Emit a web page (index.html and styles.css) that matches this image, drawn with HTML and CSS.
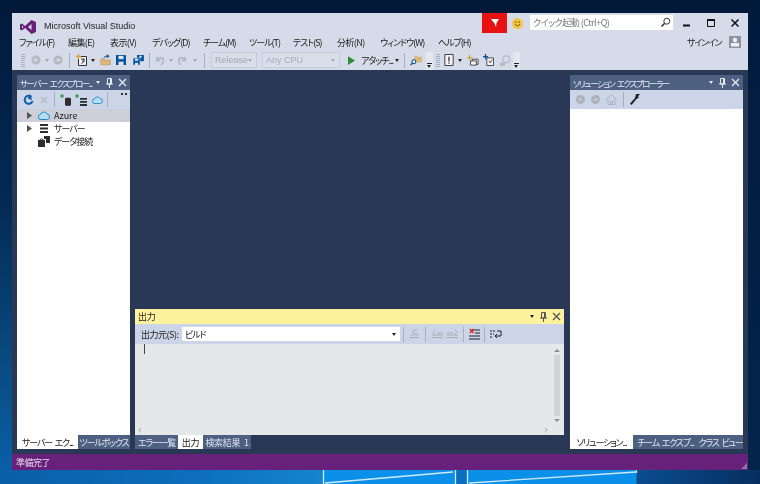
FILE: index.html
```html
<!DOCTYPE html>
<html lang="ja">
<head>
<meta charset="utf-8">
<title>Microsoft Visual Studio</title>
<link rel="stylesheet" href="styles.css">
</head>
<body>
<div class="desktop">
  <svg class="beams" width="760" height="14" viewBox="0 0 760 14"><path d="M455 0H467V14H455Z" fill="#0a6fc0"/><path d="M323.500 0V14M325 13L453 2M455.500 0V14M467.500 0V14M469 13L636 2" stroke="#cfe9fa" stroke-width="1.300" fill="none"/><path d="M636.500 0V3" stroke="#bfe3f8" stroke-width="1.300"/></svg>
  <div class="window">
    <header class="head">
      <div class="title-row">
        <svg class="vs-logo" width="16" height="14" viewBox="0 0 16 14"><path d="M11.500 0L16 2V12L11.500 14L5 8L2 10.500L0 9.500V4.500L2 3.500L5 6ZM11.500 4L8 7L11.500 10ZM2 5.500V8.500L3.600 7Z" fill="#68217a"/></svg>
        <span class="app-name">Microsoft Visual Studio</span>
        <div class="flag"><svg width="10" height="10" viewBox="0 0 10 10"><path d="M1 1H9L6.500 5L6 9L4.500 5.500Z" fill="#fff"/></svg></div>
        <svg class="smile" width="11" height="11" viewBox="0 0 11 11"><circle cx="5.500" cy="5.500" r="5.500" fill="#f3c545"/><circle cx="3.800" cy="4" r=".8" fill="#7a5a10"/><circle cx="7.200" cy="4" r=".8" fill="#7a5a10"/><path d="M3 6.500Q5.500 9 8 6.500" stroke="#7a5a10" fill="none"/></svg>
        <div class="quick"><span>クイック起動 (Ctrl+Q)</span>
          <svg width="11" height="11" viewBox="0 0 11 11"><circle cx="6.800" cy="4.200" r="3" stroke="#333" stroke-width="1" fill="none"/><path d="M4.500 6.500L1.500 9.500" stroke="#333" stroke-width="1.600"/></svg></div>
        <div class="win-btns">
          <svg width="10" height="10" viewBox="0 0 10 10"><path d="M1 7.500H8" stroke="#111" stroke-width="2"/></svg>
          <svg width="10" height="10" viewBox="0 0 10 10"><path d="M1.500 2.500H8.500V8.500H1.500Z" stroke="#111" fill="none"/><path d="M1 2H9" stroke="#111" stroke-width="2"/></svg>
          <svg width="10" height="10" viewBox="0 0 10 10"><path d="M1.500 1.500L8.500 8.500M8.500 1.500L1.500 8.500" stroke="#111" stroke-width="1.500"/></svg>
        </div>
      </div>
      <div class="menu-row">
        <nav class="menu">
          <span class="m1">ファイル(F)</span><span class="m2">編集(E)</span><span class="m3">表示(V)</span><span class="m4">デバッグ(D)</span><span class="m5">チーム(M)</span><span class="m6">ツール(T)</span><span class="m7">テスト(S)</span><span class="m8">分析(N)</span><span class="m9">ウィンドウ(W)</span><span class="m10">ヘルプ(H)</span>
        </nav>
        <span class="signin">サインイン</span>
        <svg class="avatar" width="12" height="12" viewBox="0 0 12 12"><path d="M0 0H12V12H0Z" fill="#8f93a0"/><circle cx="6" cy="4" r="2.200" fill="#eef0f5"/><path d="M2 7H10V10.500H2Z" fill="#eef0f5"/></svg>
      </div>
      <div class="toolbar main-tools">
        <i class="grip"></i>
        <svg class="ic ic-back" width="10" height="10" viewBox="0 0 11 11"><circle cx="5.500" cy="5.500" r="5" fill="#b6b9c1"/><path d="M8 5.500H3.500M5.500 3.500L3.500 5.500L5.500 7.500" stroke="#e6e8ef" fill="none"/></svg>
        <i class="caret dim c-a"></i>
        <svg class="ic ic-fwd" width="10" height="10" viewBox="0 0 11 11"><circle cx="5.500" cy="5.500" r="5" fill="#b6b9c1"/><path d="M3 5.500H7.500M5.500 3.500L7.500 5.500L5.500 7.500" stroke="#e6e8ef" fill="none"/></svg>
        <i class="sep s-a"></i>
        <svg class="ic ic-new" width="11" height="12" viewBox="0 0 11 12"><path d="M2.500 2.500H10.500V11.500H2.500Z" fill="#f4f4f6" stroke="#333"/><path d="M5 5H8.500L6.500 7H8.500L5.500 9.500" stroke="#333" fill="none"/><path d="M2.500 0V5M0 2.500H5" stroke="#d8a030" stroke-width="1.300"/></svg>
        <i class="caret c-b"></i>
        <svg class="ic ic-open" width="12" height="12" viewBox="0 0 15 13"><path d="M1 5H5L6 6.500H13V12.500H1Z" fill="#dcb67a" stroke="#b08a4a" stroke-width=".6"/><path d="M5 4Q6 1 9 1.500M9 0V3.500L11.500 1.700Z" stroke="#00539c" fill="#00539c"/></svg>
        <svg class="ic ic-save" width="10" height="10" viewBox="0 0 12 12"><path d="M0 0H11L12 1V12H0Z" fill="#00539c"/><path d="M3 1H9V5H3Z" fill="#dfe6f2"/><path d="M3 8H9V12H3Z" fill="#dfe6f2"/></svg>
        <svg class="ic ic-saveall" width="11" height="10" viewBox="0 0 14 13"><path d="M5 0H14V8H5Z" fill="#00539c"/><path d="M8 1H11V3.500H8Z" fill="#dfe6f2"/><path d="M0 4H9V13H0Z" fill="#00539c" stroke="#d6dbe9" stroke-width=".6"/><path d="M2.500 5H6.500V7.500H2.500ZM2.500 10H6.500V13H2.500Z" fill="#dfe6f2"/></svg>
        <i class="sep s-b"></i>
        <svg class="ic ic-undo" width="10" height="11" viewBox="0 0 11 12"><path d="M2 2V6H6M2.500 5.500Q5 2 8 3.500T7 11" stroke="#aeb2bc" stroke-width="1.600" fill="none"/></svg>
        <i class="caret dim c-c"></i>
        <svg class="ic ic-redo" width="10" height="11" viewBox="0 0 11 12"><path d="M9 2V6H5M8.500 5.500Q6 2 3 3.500T4 11" stroke="#aeb2bc" stroke-width="1.600" fill="none"/></svg>
        <i class="caret dim c-d"></i>
        <i class="sep s-c"></i>
        <div class="combo cb-release"><span>Release</span><i class="caret dim"></i></div>
        <div class="combo cb-cpu"><span>Any CPU</span><i class="caret dim"></i></div>
        <svg class="ic ic-play" width="7" height="9" viewBox="0 0 8 10"><path d="M0 0L8 5L0 10Z" fill="#2f8a3c"/></svg>
        <span class="attach">アタッチ...</span>
        <i class="caret c-e"></i>
        <i class="sep s-d"></i>
        <svg class="ic ic-find" width="12" height="11" viewBox="0 0 14 13"><path d="M5 1H8L9 2H14V9H5Z" fill="#dcb67a"/><circle cx="4.500" cy="8" r="2.300" stroke="#00539c" stroke-width="1.200" fill="#f2f4f8"/><path d="M3 9.500L.5 12" stroke="#00539c" stroke-width="1.500"/></svg>
        <div class="overflow of-a"><i></i></div>
        <i class="grip g-b"></i>
        <svg class="ic ic-doc" width="10" height="12" viewBox="0 0 10 13"><path d="M.5.500H9.500V12.500H.5Z" fill="#f4f4f6" stroke="#333"/><path d="M5 3V8M5 9.200V10.500" stroke="#222" stroke-width="1.300"/></svg>
        <i class="caret c-f"></i>
        <svg class="ic ic-t1" width="12" height="11" viewBox="0 0 14 13"><path d="M6 5H13V11H6Z" fill="#f4f4f6" stroke="#333"/><path d="M4 7H11V12H4Z" fill="#f4f4f6" stroke="#333"/><path d="M3 0V6M0 3H6" stroke="#d8a030" stroke-width="1.500"/></svg>
        <svg class="ic ic-t2" width="11" height="12" viewBox="0 0 13 14"><path d="M4.500 4.500H12.500V13.500H4.500Z" fill="#f4f4f6" stroke="#333"/><path d="M7 8L8.500 10.500L11 6.500" stroke="#333" fill="none"/><path d="M3 0V6M0 3H6" stroke="#00539c" stroke-width="1.500"/></svg>
        <svg class="ic ic-t3" width="12" height="11" viewBox="0 0 14 13"><circle cx="8.500" cy="5" r="4" stroke="#b8bbc4" stroke-width="1.500" fill="none"/><path d="M1 9H7V13H1Z" fill="#b8bbc4"/></svg>
        <div class="overflow of-b"><i></i></div>
      </div>
    </header>

    <main class="panes">
      <section class="pane">
        <div class="pane-title"><span class="pt-text">サーバー エクスプロー...</span><i class="caret light"></i>
          <svg class="pin" width="9" height="10" viewBox="0 0 9 10"><path d="M2.500.500H6.500V6H2.500ZM1 6H8M4.500 6V10M5.500 1V6" stroke="#e6ebf5" fill="none"/></svg>
          <svg class="x" width="9" height="9" viewBox="0 0 9 9"><path d="M1 1L8 8M8 1L1 8" stroke="#e6ebf5" stroke-width="1.300"/></svg></div>
        <div class="pane-tools tools-server">
          <svg width="11" height="12" viewBox="0 0 11 12"><path d="M8.500 3A4 4 0 1 0 9.500 7" stroke="#0f5ea8" stroke-width="2" fill="none"/><path d="M5.500 0V5H10Z" fill="#0f5ea8" transform="rotate(15 6 3)"/></svg>
          <svg class="st-x" width="8" height="8" viewBox="0 0 8 8"><path d="M1 1L7 7M7 1L1 7" stroke="#b4b8c2" stroke-width="1.500"/></svg>
          <i class="sep st-s1"></i>
          <svg class="st-db" width="12" height="12" viewBox="0 0 12 12"><path d="M5 5Q5 3.500 8 3.500T11 5V11Q11 12 8 12T5 11Z" fill="#2e2e30"/><path d="M2 0V4M0 2H4" stroke="#3a9a50" stroke-width="1.300"/></svg>
          <svg class="st-list" width="12" height="12" viewBox="0 0 12 12"><path d="M5 4H12V5.800H5ZM5 7H12V8.800H5ZM5 10H12V12H5Z" fill="#2e2e30"/><path d="M2 0V4M0 2H4" stroke="#3a9a50" stroke-width="1.300"/></svg>
          <svg class="st-cloud" width="11" height="8" viewBox="0 0 12 9"><path d="M3 8.500A2.500 2.500 0 0 1 2.500 3.500A3.500 3.500 0 0 1 9 3A2.800 2.800 0 0 1 9.500 8.500Z" fill="#b5def5" stroke="#1b87c9"/></svg>
          <i class="sep st-s2"></i>
          <span class="more"></span>
        </div>
        <div class="pane-body">
          <div class="tree-row selected">
            <i class="tri"></i>
            <svg width="12" height="9" viewBox="0 0 12 9"><path d="M3 8.500A2.500 2.500 0 0 1 2.500 3.500A3.500 3.500 0 0 1 9 3A2.800 2.800 0 0 1 9.500 8.500Z" fill="#b5def5" stroke="#1b87c9"/></svg>
            <span class="latin">Azure</span></div>
          <div class="tree-row">
            <i class="tri"></i>
            <svg width="12" height="9" viewBox="0 0 12 9"><path d="M2 0H10V2H2ZM2 3.500H10V5.500H2ZM2 7H10V9H2Z" fill="#2e2e30"/></svg>
            <span>サーバー</span></div>
          <div class="tree-row">
            <i class="tri none"></i>
            <svg width="12" height="11" viewBox="0 0 12 11"><path d="M0 4H7V11H0Z" fill="#2e2e30"/><path d="M6 0H12V7H8V3H6Z" fill="#2e2e30"/><path d="M1.500 4Q3.500 1.500 5.500 4" stroke="#2e2e30" fill="none"/></svg>
            <span>データ接続</span></div>
        </div>
        <div class="tabs">
          <span class="tab active t-server">サーバー エク...</span><span class="tab t-toolbox">ツールボックス</span>
        </div>
      </section>

      <section class="center">
        <div class="doc-well"></div>
        <div class="output">
          <div class="pane-title yellow"><span class="pt-text">出力</span><i class="caret"></i>
            <svg class="pin" width="9" height="10" viewBox="0 0 9 10"><path d="M2.500.500H6.500V6H2.500ZM1 6H8M4.500 6V10M5.500 1V6" stroke="#555" fill="none"/></svg>
            <svg class="x" width="9" height="9" viewBox="0 0 9 9"><path d="M1 1L8 8M8 1L1 8" stroke="#555" stroke-width="1.300"/></svg></div>
          <div class="pane-tools tools-output">
            <span class="src-label">出力元(S):</span>
            <div class="src-combo"><span>ビルド</span><i class="caret"></i></div>
            <i class="sep ot-s1"></i>
            <svg class="ot-i1" width="11" height="11" viewBox="0 0 11 11"><path d="M1 6H10M1 8.500H10M4 4H8M8 1H4V4" stroke="#a9adb8" fill="none"/></svg>
            <i class="sep ot-s2"></i>
            <svg class="ot-i2" width="11" height="9" viewBox="0 0 11 9"><path d="M0 5H11M0 7.500H11M5 3H11M3 0L1 2L3 4" stroke="#a9adb8" fill="none"/></svg>
            <svg class="ot-i3" width="11" height="9" viewBox="0 0 11 9"><path d="M0 5H11M0 7.500H11M0 3H6M8 0L10 2L8 4" stroke="#a9adb8" fill="none"/></svg>
            <i class="sep ot-s3"></i>
            <svg class="ot-i4" width="11" height="12" viewBox="0 0 11 12"><path d="M4 2H11M6 5H11M0 8H11M0 11H11" stroke="#222" stroke-width="1.200"/><path d="M1 1L4.500 5M4.500 1L1 5" stroke="#d02020" stroke-width="1.300"/></svg>
            <i class="sep ot-s4"></i>
            <svg class="ot-i5" width="12" height="11" viewBox="0 0 12 11"><path d="M0 2H2M3 2H5M0 5H2M3 5H4M0 8H2M7 2H11V7H5M7 5L5 7L7 9" stroke="#222" fill="none"/></svg>
          </div>
          <div class="out-body">
            <div class="out-text"><i class="cursor"></i>
              <div class="hscroll"><i class="arr-l"></i><i class="arr-r"></i></div></div>
            <div class="vscroll"><i class="arr-u"></i><b></b><i class="arr-d"></i></div>
          </div>
        </div>
        <div class="tabs">
          <span class="tab t-err">エラー一覧</span><span class="tab active t-out">出力</span><span class="tab t-find">検索結果 1</span>
        </div>
      </section>

      <section class="pane">
        <div class="pane-title"><span class="pt-text">ソリューション エクスプローラー</span><i class="caret light"></i>
          <svg class="pin" width="9" height="10" viewBox="0 0 9 10"><path d="M2.500.500H6.500V6H2.500ZM1 6H8M4.500 6V10M5.500 1V6" stroke="#e6ebf5" fill="none"/></svg>
          <svg class="x" width="9" height="9" viewBox="0 0 9 9"><path d="M1 1L8 8M8 1L1 8" stroke="#e6ebf5" stroke-width="1.300"/></svg></div>
        <div class="pane-tools tools-sol">
          <svg width="9" height="9" viewBox="0 0 11 11"><circle cx="5.500" cy="5.500" r="5.500" fill="#aeb2bc"/><path d="M8 5.500H3.500M5.500 3.500L3.500 5.500L5.500 7.500" stroke="#ccd5e8" fill="none"/></svg>
          <svg width="9" height="9" viewBox="0 0 11 11"><circle cx="5.500" cy="5.500" r="5.500" fill="#aeb2bc"/><path d="M3 5.500H7.500M5.500 3.500L7.500 5.500L5.500 7.500" stroke="#ccd5e8" fill="none"/></svg>
          <svg width="11" height="11" viewBox="0 0 11 11"><path d="M.5 5.500L5.500 .5L10.500 5.500M2 5V10.500H9V5M4.500 10.500V7H6.500V10.500" stroke="#aeb2bc" fill="none"/></svg>
          <i class="sep"></i>
          <svg width="10" height="11" viewBox="0 0 10 11"><path d="M6 0L10 0L8 2.500L9 3.500L6.500 5L1.500 11L0 9.500L5 4Z" fill="#222"/></svg>
        </div>
        <div class="pane-body"></div>
        <div class="tabs">
          <span class="tab active t-sol">ソリューション...</span><span class="tab t-team">チーム エクスプ...</span><span class="tab t-class">クラス ビュー</span>
        </div>
      </section>
    </main>

    <footer class="status"><span>準備完了</span>
      <svg width="6" height="6" viewBox="0 0 6 6"><path d="M6 0V6H0Z" fill="#9a70a8"/></svg></footer>
  </div>
</div>
</body>
</html>
```

FILE: styles.css
```css
* { box-sizing: border-box; }
html, body { margin: 0; padding: 0; }
body { font-family: "Noto Sans CJK JP", "Liberation Sans", sans-serif; font-feature-settings: "palt"; font-size: 9px; }
i { display: block; font-style: normal; }
svg { display: block; flex: none; }

.desktop {
  position: relative;
  width: 760px;
  height: 484px;
  padding: 13px 12px 14px;
  overflow: hidden;
  background:
    linear-gradient(90deg, #0a5fa6 0, #0c6fbe 200px, #1585d0 322px, #0a90e8 324px, #0a90e8 636px, #0a4d8e 637px, #062f60 760px) bottom / 100% 14px no-repeat,
    linear-gradient(180deg, #01193b 0, #032a52 200px, #0a4a80 360px, #0a5fa6 470px) left / 12px 100% no-repeat,
    linear-gradient(180deg, #021a3c 0, #03254c 470px) right / 12px 100% no-repeat,
    #02193a;
}
.beams { position: absolute; left: 0; bottom: 0; }

.window {
  position: relative;
  width: 736px;
  height: 457px;
  display: flex;
  flex-direction: column;
  background: #293955;
  filter: blur(.35px);
}

/* header */
.head { height: 57px; background: #d6dbe9; color: #1e1e1e; flex: none; }
.title-row { height: 21px; display: flex; align-items: flex-start; }
.vs-logo { margin: 7px 0 0 8px; }
.app-name { margin: 7px 0 0 8px; font: 9px/12px "Liberation Sans", sans-serif; color: #222; width: 438px; }
.flag { width: 25px; height: 20px; background: #e81212; display: flex; align-items: center; justify-content: center; }
.smile { margin: 5px 0 0 5px; }
.quick {
  margin: 2px 0 0 7px; width: 143px; height: 15px; background: #fff;
  display: flex; align-items: center; justify-content: space-between; padding: 0 2px 0 3px;
  color: #777; letter-spacing: -.5px; white-space: nowrap;
}
.win-btns { display: flex; margin: 5px 0 0 9px; gap: 14px; }

.menu-row { height: 16px; display: flex; align-items: center; color: #222; }
.menu { display: flex; width: 675px; padding-left: 7px; white-space: nowrap; letter-spacing: -1px; }
.menu span { flex: none; }
.m1 { width: 49px; } .m2 { width: 42px; letter-spacing: -.6px; } .m3 { width: 42px; letter-spacing: -.6px; } .m4 { width: 51px; }
.m5 { width: 46px; } .m6 { width: 44px; } .m7 { width: 44px; } .m8 { width: 43px; letter-spacing: -.6px; }
.m9 { width: 58px; } .m10 { width: 40px; }
.signin { width: 42px; white-space: nowrap; letter-spacing: -1.200px; flex: none; }

.toolbar { height: 20px; display: flex; align-items: center; }
.caret { width: 0; height: 0; border: 2.500px solid transparent; border-top: 3px solid #222; border-bottom: 0; flex: none; }
.caret.dim { border-top-color: #a4a8b2; }
.caret.light { border-top-color: #e6ebf5; }
.sep { width: 1px; height: 15px; background: #a9aebc; flex: none; }
.grip {
  width: 4px; height: 13px; margin-left: 9px; flex: none;
  background: repeating-linear-gradient(0deg, #a0a5b2 0 1px, transparent 1px 2px);
  opacity: .8;
}
.ic-back { margin-left: 6px; }
.c-a { margin-left: 4px; }
.ic-fwd { margin-left: 4px; }
.s-a { margin-left: 6px; }
.ic-new { margin-left: 6px; }
.c-b { margin-left: 4px; }
.ic-open { margin-left: 5px; }
.ic-save { margin-left: 4px; }
.ic-saveall { margin-left: 7px; }
.s-b { margin-left: 5px; }
.ic-undo { margin-left: 5px; }
.c-c { margin-left: 4px; }
.ic-redo { margin-left: 4px; }
.c-d { margin-left: 6px; }
.s-c { margin-left: 7px; }
.combo {
  height: 16px; margin-left: 5px; border: 1px solid #c6cad6; background: #d9deea;
  display: flex; align-items: center; justify-content: space-between; padding: 0 4px 0 3px;
  font: 9px "Liberation Sans", sans-serif; color: #a4a8b2;
}
.cb-release { width: 46px; margin-left: 6px; }
.cb-cpu { width: 78px; }
.ic-play { margin-left: 8px; }
.attach { margin-left: 6px; width: 31px; white-space: nowrap; color: #222; letter-spacing: -1px; }
.c-e { margin-left: 3px; }
.s-d { margin-left: 5px; }
.ic-find { margin-left: 5px; }
.overflow { width: 7px; height: 18px; margin-left: 4px; background: #e4e7f0; position: relative; align-self: flex-end; }
.overflow i { position: absolute; left: 1px; bottom: 6px; width: 5px; height: 1px; background: #222; }
.overflow i::after { content: ""; position: absolute; left: 0; top: 2px; border: 2.500px solid transparent; border-top: 3px solid #222; border-bottom: 0; }
.g-b { margin-left: 3px; }
.ic-doc { margin-left: 4px; }
.c-f { margin-left: 4px; }
.ic-t1 { margin-left: 5px; }
.ic-t2 { margin-left: 4px; }
.ic-t3 { margin-left: 5px; }
.of-b { margin-left: 2px; }

/* panes */
.panes {
  flex: 1; min-height: 0; display: grid;
  grid-template-columns: 113px 429px 173px;
  column-gap: 5px; padding: 5px 5px 5px;
}
.panes > :last-child { margin-left: 1px; width: 173px; }
.pane, .center { display: flex; flex-direction: column; min-height: 0; min-width: 0; }
.pane-title {
  height: 15px; flex: none; background: #4d6082; color: #e6ebf5;
  display: flex; align-items: center; padding: 0 3px;
  white-space: nowrap; font-size: 8.500px; letter-spacing: -1.400px; word-spacing: 2px;
}
.pt-text { flex: 1; min-width: 0; }
.pin { margin-left: 4px; }
.x { margin-left: 4px; }
.pane-title .caret { margin-right: 1px; }
.pane-title.yellow { background: #fff29d; color: #222; font-size: 9px; letter-spacing: -.2px; }
.pane-tools { height: 19px; flex: none; background: #ccd5e8; display: flex; align-items: center; }
.pane-body { flex: 1; background: #fff; min-height: 0; }
.tools-server { padding-left: 6px; position: relative; }
.st-x { margin-left: 6px; }
.st-s1 { margin-left: 6px; }
.st-db { margin-left: 5px; }
.st-list { margin-left: 3px; }
.st-cloud { margin-left: 5px; }
.st-s2 { margin-left: 4px; }
.more { position: absolute; right: 3px; top: 3px; width: 6px; height: 2px;
  background: radial-gradient(circle at 1px 1px, #333 1px, transparent 1px) 0 0 / 4px 2px; }
.tools-sol { padding-left: 6px; gap: 6px; }

.tree-row {
  height: 13px; display: flex; align-items: center; color: #222;
  padding-left: 10px; white-space: nowrap; letter-spacing: -1px;
}
.tree-row.selected { background: #ccced8; }
.tree-row span { margin-left: 4px; }
.tree-row .latin { letter-spacing: 0; }
.tri { width: 5px; height: 7px; margin-right: 6px; flex: none;
  clip-path: polygon(0 0, 100% 50%, 0 100%); background-color: #555; }
.tri.none { visibility: hidden; }

.tabs { height: 14px; flex: none; display: flex; background: #293955; }
.tab {
  background: #4d6082; color: #e0e6f0; line-height: 15px; text-align: center;
  white-space: nowrap; letter-spacing: -1.200px; word-spacing: 2px;
}
.tab.active { background: #fff; color: #222; }
.t-server { width: 61px; } .t-toolbox { width: 52px; }
.t-err { width: 43px; } .t-out { width: 25px; letter-spacing: -.2px; } .t-find { width: 48px; letter-spacing: -.3px; }
.t-sol { width: 63px; } .t-team { width: 65px; } .t-class { width: 45px; }

/* centre */
.doc-well { height: 234px; flex: none; background: #293955; }
.output { flex: 1; display: flex; flex-direction: column; min-height: 0; }
.tools-output { height: 20px; padding-left: 6px; }
.src-label { color: #222; width: 37px; white-space: nowrap; letter-spacing: -.5px; }
.src-combo {
  width: 218px; height: 14px; margin-left: 4px; background: #fff; display: flex; align-items: center; justify-content: space-between;
  padding: 0 4px 0 3px; color: #222; letter-spacing: -1px;
}
.ot-s1 { margin-left: 3px; } .ot-i1 { margin-left: 5px; } .ot-s2 { margin-left: 5px; }
.ot-i2 { margin-left: 6px; } .ot-i3 { margin-left: 4px; } .ot-s3 { margin-left: 5px; }
.ot-i4 { margin-left: 5px; } .ot-s4 { margin-left: 4px; } .ot-i5 { margin-left: 5px; }
.out-body { flex: 1; background: #e6e7e8; display: flex; min-height: 0; }
.out-text { flex: 1; position: relative; }
.cursor { width: 1px; height: 10px; background: #444; margin: 0 0 0 9px; }
.hscroll { position: absolute; left: 0; right: 0; bottom: 0; height: 10px; }
.arr-l, .arr-r { position: absolute; top: 2px; width: 0; height: 0; border: 3px solid transparent; }
.arr-l { left: 3px; border-right: 3px solid #c4c6cb; border-left: 0; }
.arr-r { right: 2px; border-left: 3px solid #c4c6cb; border-right: 0; }
.vscroll { width: 14px; display: flex; flex-direction: column; align-items: center; padding: 5px 0 13px; }
.vscroll b { flex: 1; width: 6px; background: #d2d3d6; margin: 3px 0; display: block; }
.arr-u, .arr-d { width: 0; height: 0; border: 3px solid transparent; }
.arr-u { border-bottom: 3px solid #8e9096; border-top: 0; }
.arr-d { border-top: 3px solid #8e9096; border-bottom: 0; }

/* status */
.status {
  height: 16px; flex: none; background: #68217a; color: #e8dcef; letter-spacing: -.5px;
  display: flex; align-items: center; justify-content: space-between; padding: 0 1px 0 4px;
}
.status svg { align-self: flex-end; margin-bottom: 1px; }
```
